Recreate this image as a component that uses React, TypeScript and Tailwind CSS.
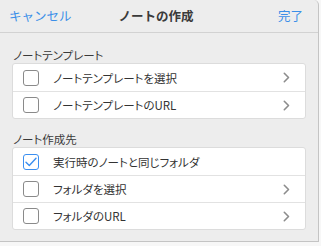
import React from 'react';

const font = { fontFamily: '"Noto Sans CJK JP", "Noto Sans", sans-serif' };

type Row = { label: string; checked?: boolean; chevron?: boolean };

const Checkbox: React.FC<{ checked?: boolean }> = ({ checked }) => (
  <div
    className={
      'flex h-[16px] w-[16px] items-center justify-center rounded-[3px] border ' +
      (checked ? 'border-[#3b8ff0]' : 'border-[#8a8a8a]')
    }
  >
    {checked && (
      <svg width="12" height="10" viewBox="0 0 12 10" fill="none">
        <path d="M1 5.2 L4.3 8.4 L11 1.2" stroke="#3b8ff0" strokeWidth="1.4" strokeLinecap="round" strokeLinejoin="round" />
      </svg>
    )}
  </div>
);

const Chevron = () => (
  <svg width="7" height="11" viewBox="0 0 7 11" fill="none">
    <path d="M1.3 1.3 L5.5 5.5 L1.3 9.7" stroke="#8c8c8c" strokeWidth="1.6" strokeLinecap="round" strokeLinejoin="round" />
  </svg>
);

const Section: React.FC<{ title: string; rows: Row[] }> = ({ title, rows }) => (
  <div>
    <div className="h-[16px] pl-[13px] text-[11.5px] leading-[16px] text-[#3a3a3a] [font-feature-settings:'palt']">
      {title}
    </div>
    <div className="ml-[12px] mr-[12px] overflow-hidden rounded-[3px] border border-[#dcdcdc] bg-white">
      {rows.map((row, i) => (
        <div
          key={row.label}
          className={
            'flex h-[27px] items-center pl-[10px] pr-[15px] ' + (i > 0 ? 'border-t border-[#e2e2e2]' : '')
          }
        >
          <Checkbox checked={row.checked} />
          <span className="ml-[14px] flex-1 text-[11.5px] leading-[16px] text-[#333333] [font-feature-settings:'palt']">
            {row.label}
          </span>
          {row.chevron !== false && <Chevron />}
        </div>
      ))}
    </div>
  </div>
);

const App: React.FC = () => {
  return (
    <div className="h-[246px] w-[321px] bg-[#f7f7f7]" style={font}>
      <div className="h-[242px] w-[319px] overflow-hidden rounded-tr-[5px] border-r border-b border-[#c4c4c4] bg-[#ededed]">
        <div className="flex h-[33px] items-center border-b border-[#d2d2d2] px-[9px] text-[12.5px]">
          <span className="flex-1 text-[#3b8fe8]">キャンセル</span>
          <span className="font-bold text-[#3a3a3a]">ノートの作成</span>
          <span className="flex-1 pr-[6px] text-right text-[#3b8fe8]">完了</span>
        </div>
        <div className="flex flex-col gap-[12px] pt-[14px]">
          <Section
            title="ノートテンプレート"
            rows={[{ label: 'ノートテンプレートを選択' }, { label: 'ノートテンプレートのURL' }]}
          />
          <Section
            title="ノート作成先"
            rows={[
              { label: '実行時のノートと同じフォルダ', checked: true, chevron: false },
              { label: 'フォルダを選択' },
              { label: 'フォルダのURL' },
            ]}
          />
        </div>
      </div>
    </div>
  );
};

export default App;
